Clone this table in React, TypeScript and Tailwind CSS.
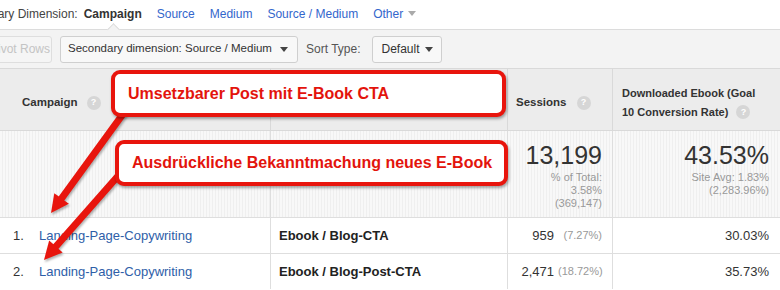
import React from 'react';

const font = { fontFamily: '"Liberation Sans", Arial, sans-serif' };

function Help() {
  return (
    <span className="inline-flex h-[14px] w-[14px] items-center justify-center rounded-full bg-[#d6d6d6] text-[9px] font-bold text-white">
      ?
    </span>
  );
}

function Caret({ color = '#444' }: { color?: string }) {
  return (
    <svg width="8" height="5" viewBox="0 0 8 5">
      <path d="M0 0 L8 0 L4 5 Z" fill={color} />
    </svg>
  );
}

function Arrow({ x1, y1, x2, y2 }: { x1: number; y1: number; x2: number; y2: number }) {
  const dx = x2 - x1;
  const dy = y2 - y1;
  const len = Math.sqrt(dx * dx + dy * dy);
  const ux = dx / len;
  const uy = dy / len;
  const head = 18;
  const bx = x2 - ux * head;
  const by = y2 - uy * head;
  const px = -uy * 9;
  const py = ux * 9;
  return (
    <g>
      <line x1={x1} y1={y1} x2={bx + ux * 2} y2={by + uy * 2} stroke="#e8150d" strokeWidth="7" strokeLinecap="round" />
      <polygon points={`${x2},${y2} ${bx + px},${by + py} ${bx - px},${by - py}`} fill="#e8150d" />
    </g>
  );
}

const stripes = 'bg-[repeating-linear-gradient(90deg,#f8f8f8_0px,#f8f8f8_2px,#efefef_2px,#efefef_3px)]';

export default function App() {
  return (
    <div className="relative h-[290px] w-[780px] overflow-hidden whitespace-nowrap bg-white text-[#333]" style={font}>
      {/* dimension tabs */}
      <div className="relative flex h-[30px] items-center border-b border-[#dcdcdc] pb-[2px] text-[12px]">
        <span className="-ml-[27px] text-[#444]">Primary Dimension:</span>
        <span className="ml-[6px] font-bold text-[#333]">Campaign</span>
        <span className="ml-[15px] text-[#3366cc]">Source</span>
        <span className="ml-[15px] text-[#3366cc]">Medium</span>
        <span className="ml-[15px] text-[#3366cc]">Source / Medium</span>
        <span className="ml-[15px] flex items-center gap-[5px] text-[#3366cc]">
          Other <Caret color="#aaa" />
        </span>
        <span className="absolute bottom-[-5px] left-[109px] h-[9px] w-[9px] rotate-45 border-l border-t border-[#dcdcdc] bg-[#f3f3f3]" />
      </div>

      {/* toolbar */}
      <div className="flex h-[38px] items-center gap-[8px] bg-[#f3f3f3] text-[12px]">
        <div className="-ml-[12px] flex h-[27px] w-[64px] items-center justify-center rounded-[3px] border border-[#dedede] bg-[#f5f5f5] text-[#c4c4c4]">
          Pivot Rows
        </div>
        <div className="flex h-[27px] w-[238px] items-center justify-between rounded-[3px] border border-[#cfcfcf] bg-[#f8f8f8] pl-[7px] pr-[9px] text-[11.5px] text-[#333]">
          <span>Secondary dimension: Source / Medium</span>
          <Caret />
        </div>
        <span className="text-[#555]">Sort Type:</span>
        <div className="ml-[4px] flex h-[27px] w-[70px] items-center justify-between rounded-[3px] border border-[#cfcfcf] bg-[#f8f8f8] px-[8px] text-[#333]">
          <span>Default</span>
          <Caret />
        </div>
      </div>

      {/* table */}
      <div className="grid grid-cols-[270px_237px_105px_168px] border-t border-[#d9d9d9] text-[13px]">
        {/* header */}
        <div className="flex h-[62px] items-center gap-[9px] border-b border-[#d9d9d9] bg-[#ececec] pl-[22px] pt-[6px] text-[11.5px] font-bold text-[#333]">
          Campaign <Help />
        </div>
        <div className="h-[62px] border-b border-l border-[#d9d9d9] bg-[#ececec]" />
        <div className="flex h-[62px] items-center gap-[10px] border-b border-l border-[#d9d9d9] bg-[#ececec] pl-[8px] pt-[6px] text-[11.5px] font-bold">
          Sessions <Help />
        </div>
        <div className="flex h-[62px] flex-col justify-center border-b border-l border-[#d9d9d9] bg-[#ececec] pl-[9px] pt-[6px] text-[11px] font-bold leading-[19px]">
          <span>Downloaded Ebook (Goal</span>
          <span className="flex items-center gap-[8px]">
            10 Conversion Rate) <Help />
          </span>
        </div>

        {/* totals */}
        <div className={`h-[86px] ${stripes}`} />
        <div className={`h-[86px] border-l border-[#dedede] ${stripes}`} />
        <div className={`flex h-[86px] flex-col items-end border-l border-[#dedede] pr-[10px] pt-[10px] ${stripes}`}>
          <span className="text-[25px] leading-[28px] text-[#333]">13,199</span>
          <span className="mt-[2px] text-right text-[11px] leading-[13px] text-[#999]">
            % of Total:
            <br />
            3.58%
            <br />
            (369,147)
          </span>
        </div>
        <div className={`flex h-[86px] flex-col items-end border-l border-[#dedede] pr-[11px] pt-[10px] ${stripes}`}>
          <span className="text-[25px] leading-[28px] text-[#333]">43.53%</span>
          <span className="mt-[2px] text-right text-[11px] leading-[13px] text-[#999]">
            Site Avg: 1.83%
            <br />
            (2,283.96%)
          </span>
        </div>

        {/* rows */}
        {[
          { n: '1.', dim: 'Ebook / Blog-CTA', s: '959', p: '(7.27%)', r: '30.03%' },
          { n: '2.', dim: 'Ebook / Blog-Post-CTA', s: '2,471', p: '(18.72%)', r: '35.73%' },
        ].map((row) => (
          <React.Fragment key={row.n}>
            <div className="flex h-[36px] items-center border-t border-[#dedede] pl-[13px]">
              <span className="w-[26px]">{row.n}</span>
              <span className="text-[#2e5ea8]">Landing-Page-Copywriting</span>
            </div>
            <div className="flex h-[36px] items-center border-l border-t border-[#dedede] pl-[8px] font-bold text-[#222]">
              {row.dim}
            </div>
            <div className="flex h-[36px] items-center justify-end gap-[4px] border-l border-t border-[#dedede] pr-[10px]">
              <span>{row.s}</span>
              <span className="w-[44px] text-right text-[11px] text-[#999]">{row.p}</span>
            </div>
            <div className="flex h-[36px] items-center justify-end border-l border-t border-[#dedede] pr-[11px]">
              {row.r}
            </div>
          </React.Fragment>
        ))}
      </div>

      {/* callouts */}
      <svg className="absolute left-0 top-0" width="780" height="290" style={{ filter: 'drop-shadow(1px 2px 1px rgba(0,0,0,0.3))' }}>
        <Arrow x1={123} y1={114} x2={51} y2={213} />
        <Arrow x1={118} y1={176} x2={44} y2={260} />
      </svg>
      <div className="absolute left-[111px] top-[70px] flex h-[47px] w-[395px] items-center rounded-[9px] border-[4px] border-[#e8150d] bg-white pl-[13px] text-[16px] font-bold text-[#e3140c] shadow-[1px_2px_3px_rgba(0,0,0,0.35)]">
        Umsetzbarer Post mit E-Book CTA
      </div>
      <div className="absolute left-[115px] top-[140px] flex h-[46px] w-[393px] items-center rounded-[9px] border-[4px] border-[#e8150d] bg-white pl-[13px] text-[16px] font-bold text-[#e3140c] shadow-[1px_2px_3px_rgba(0,0,0,0.35)]">
        Ausdrückliche Bekanntmachung neues E-Book
      </div>
    </div>
  );
}
